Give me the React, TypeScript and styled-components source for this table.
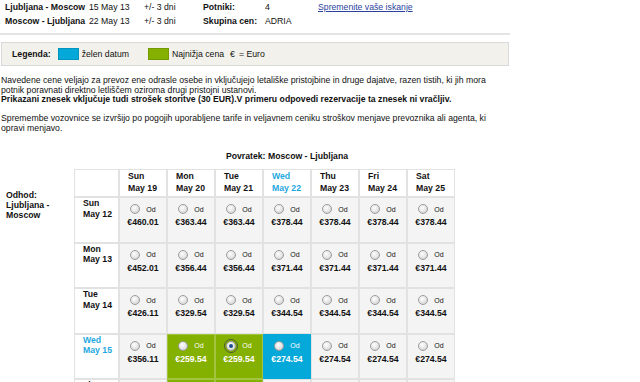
import React from 'react';
import styled, { createGlobalStyle, css } from 'styled-components';

const GlobalStyle = createGlobalStyle`
  html, body {
    margin: 0;
    padding: 0;
    background: #fff;
  }
  body {
    font-family: "Liberation Sans", Arial, sans-serif;
    font-size: 8.7px;
    color: #111;
  }
`;

const Page = styled.div`
  width: 640px;
  height: 382px;
  overflow: hidden;
`;

const SearchInfo = styled.div`
  display: grid;
  grid-template-columns: 84px 55px 59px 62px 53px auto;
  grid-auto-rows: 14px;
  align-items: center;
  padding: 0 0 0 5px;
  width: 505px;
`;

const InfoCell = styled.span<{ $bold?: boolean }>`
  white-space: nowrap;
  font-weight: ${({ $bold }) => ($bold ? 'bold' : 'normal')};
`;

const ChangeLink = styled.a`
  color: #2b3f9e;
  text-decoration: underline;
  white-space: nowrap;
`;

const Rule = styled.div`
  width: 510px;
  height: 2px;
  background: #e4e4e4;
  margin: 5px 0 0 0;
`;

const Legend = styled.div`
  display: flex;
  align-items: center;
  width: 508px;
  height: 24px;
  margin: 7px 0 0 1px;
  padding-left: 10px;
  box-sizing: border-box;
  background: #f3f1eb;
  border: 1px solid #d9d9d9;
`;

const LegendLabel = styled.span`
  font-weight: bold;
  margin-right: 7px;
`;

const Swatch = styled.span<{ $color: string }>`
  display: inline-block;
  width: 21px;
  height: 12px;
  box-sizing: border-box;
  border: 1px solid rgba(0, 0, 0, 0.12);
  background: ${({ $color }) => $color};
  margin-right: 3px;
`;

const LegendText = styled.span<{ $gap?: number }>`
  margin-right: ${({ $gap }) => $gap ?? 0}px;
`;

const Notes = styled.div`
  width: 500px;
  margin: 10px 0 0 1px;
  line-height: 9.5px;
`;

const Note = styled.p<{ $bold?: boolean }>`
  margin: 0;
  font-weight: ${({ $bold }) => ($bold ? 'bold' : 'normal')};
`;

const Spacer = styled.div`
  height: 9.5px;
`;

const Caption = styled.div`
  margin: 18px 0 0 119px;
  width: 336px;
  text-align: center;
  font-weight: bold;
  line-height: 11px;
`;

const Matrix = styled.div`
  display: flex;
  margin-top: 7px;
`;

const SideLabel = styled.div`
  width: 68px;
  padding: 21px 0 0 6px;
  font-weight: bold;
  line-height: 10px;
`;

const Grid = styled.div`
  display: grid;
  grid-template-columns: 45px repeat(7, 48px);
  grid-template-rows: 28px repeat(5, 45.5px);
`;

const HeadCell = styled.div<{ $accent?: boolean }>`
  box-sizing: border-box;
  border: 1px solid #e2e2e2;
  background: #fff;
  padding: 1px 0 0 8px;
  font-weight: bold;
  line-height: 11.5px;
  color: ${({ $accent }) => ($accent ? '#1ea8e0' : '#111')};
`;

const RowHead = styled(HeadCell)`
  padding-top: 0;
  line-height: 10.5px;
`;

type Tone = 'plain' | 'green' | 'blue';

const toneStyles = {
  plain: css`
    background: #f4f4f4;
    border-color: #e2e2e2;
    color: #111;
  `,
  green: css`
    background: #84b000;
    border-color: #a3c440;
    color: #fff;
  `,
  blue: css`
    background: #04a9d9;
    border-color: #04a9d9;
    color: #fff;
  `,
};

const PriceCell = styled.div<{ $tone: Tone }>`
  box-sizing: border-box;
  border: 1px solid;
  display: flex;
  flex-direction: column;
  align-items: center;
  padding-top: 6px;
  ${({ $tone }) => toneStyles[$tone]}
`;

const PickRow = styled.div`
  display: flex;
  align-items: center;
  gap: 6px;
  height: 10px;
`;

const Radio = styled.span<{ $checked?: boolean }>`
  position: relative;
  display: inline-block;
  width: 10px;
  height: 10px;
  box-sizing: border-box;
  border-radius: 50%;
  border: 1px solid #9c9c9c;
  background: radial-gradient(circle at 40% 35%, #ffffff 0%, #e9e9e9 45%, #c9c9c9 100%);
  ${({ $checked }) =>
    $checked &&
    css`
      outline: 1px solid #4d5a3a;
      outline-offset: 1px;
      &::after {
        content: '';
        position: absolute;
        left: 2px;
        top: 2px;
        width: 4px;
        height: 4px;
        border-radius: 50%;
        background: #1d4f8c;
      }
    `}
`;

const From = styled.span`
  font-size: 7px;
`;

const Price = styled.span`
  margin-top: 3px;
  font-weight: bold;
  line-height: 11px;
`;

const returnDays = [
  ['Sun', 'May 19'],
  ['Mon', 'May 20'],
  ['Tue', 'May 21'],
  ['Wed', 'May 22'],
  ['Thu', 'May 23'],
  ['Fri', 'May 24'],
  ['Sat', 'May 25'],
];

type Row = { day: string; date: string; accent?: boolean; prices: string[]; tones?: Tone[] };

const rows: Row[] = [
  {
    day: 'Sun',
    date: 'May 12',
    prices: ['460.01', '363.44', '363.44', '378.44', '378.44', '378.44', '378.44'],
  },
  {
    day: 'Mon',
    date: 'May 13',
    prices: ['452.01', '356.44', '356.44', '371.44', '371.44', '371.44', '371.44'],
  },
  {
    day: 'Tue',
    date: 'May 14',
    prices: ['426.11', '329.54', '329.54', '344.54', '344.54', '344.54', '344.54'],
  },
  {
    day: 'Wed',
    date: 'May 15',
    accent: true,
    prices: ['356.11', '259.54', '259.54', '274.54', '274.54', '274.54', '274.54'],
    tones: ['plain', 'green', 'green', 'blue', 'plain', 'plain', 'plain'],
  },
  {
    day: 'Thu',
    date: 'May 16',
    prices: ['356.11', '259.54', '259.54', '274.54', '274.54', '274.54', '274.54'],
    tones: ['plain', 'green', 'green', 'plain', 'plain', 'plain', 'plain'],
  },
];

export default function App() {
  return (
    <Page>
      <GlobalStyle />
      <SearchInfo>
        <InfoCell $bold>Ljubljana - Moscow</InfoCell>
        <InfoCell>15 May 13</InfoCell>
        <InfoCell>+/- 3 dni</InfoCell>
        <InfoCell $bold>Potniki:</InfoCell>
        <InfoCell>4</InfoCell>
        <ChangeLink href="#">Spremenite vaše iskanje</ChangeLink>
        <InfoCell $bold>Moscow - Ljubljana</InfoCell>
        <InfoCell>22 May 13</InfoCell>
        <InfoCell>+/- 3 dni</InfoCell>
        <InfoCell $bold>Skupina cen:</InfoCell>
        <InfoCell>ADRIA</InfoCell>
        <span />
      </SearchInfo>
      <Rule />
      <Legend>
        <LegendLabel>Legenda:</LegendLabel>
        <Swatch $color="#04a9d9" />
        <LegendText $gap={19}>želen datum</LegendText>
        <Swatch $color="#84b000" />
        <LegendText $gap={6}>Najnižja cena</LegendText>
        <LegendText $gap={4}>€</LegendText>
        <LegendText>= Euro</LegendText>
      </Legend>
      <Notes>
        <Note>
          Navedene cene veljajo za prevoz ene odrasle osebe in vključujejo letališke pristojbine in druge dajatve,
          razen tistih, ki jih mora potnik poravnati direktno letliščem oziroma drugi pristojni ustanovi.
        </Note>
        <Note $bold>
          Prikazani znesek vključuje tudi strošek storitve (30 EUR).V primeru odpovedi rezervacije ta znesek ni vračljiv.
        </Note>
        <Spacer />
        <Note>
          Spremembe vozovnice se izvršijo po pogojih uporabljene tarife in veljavnem ceniku stroškov menjave prevoznika
          ali agenta, ki opravi menjavo.
        </Note>
      </Notes>
      <Caption>Povratek: Moscow - Ljubljana</Caption>
      <Matrix>
        <SideLabel>
          Odhod:
          <br />
          Ljubljana -
          <br />
          Moscow
        </SideLabel>
        <Grid>
          <HeadCell />
          {returnDays.map(([day, date]) => (
            <HeadCell key={date} $accent={date === 'May 22'}>
              {day}
              <br />
              {date}
            </HeadCell>
          ))}
          {rows.map((row) => (
            <React.Fragment key={row.date}>
              <RowHead $accent={row.accent}>
                {row.day}
                <br />
                {row.date}
              </RowHead>
              {row.prices.map((price, i) => (
                <PriceCell key={i} $tone={row.tones?.[i] ?? 'plain'}>
                  <PickRow>
                    <Radio $checked={row.date === 'May 15' && i === 2} />
                    <From>Od</From>
                  </PickRow>
                  <Price>€{price}</Price>
                </PriceCell>
              ))}
            </React.Fragment>
          ))}
        </Grid>
      </Matrix>
    </Page>
  );
}
